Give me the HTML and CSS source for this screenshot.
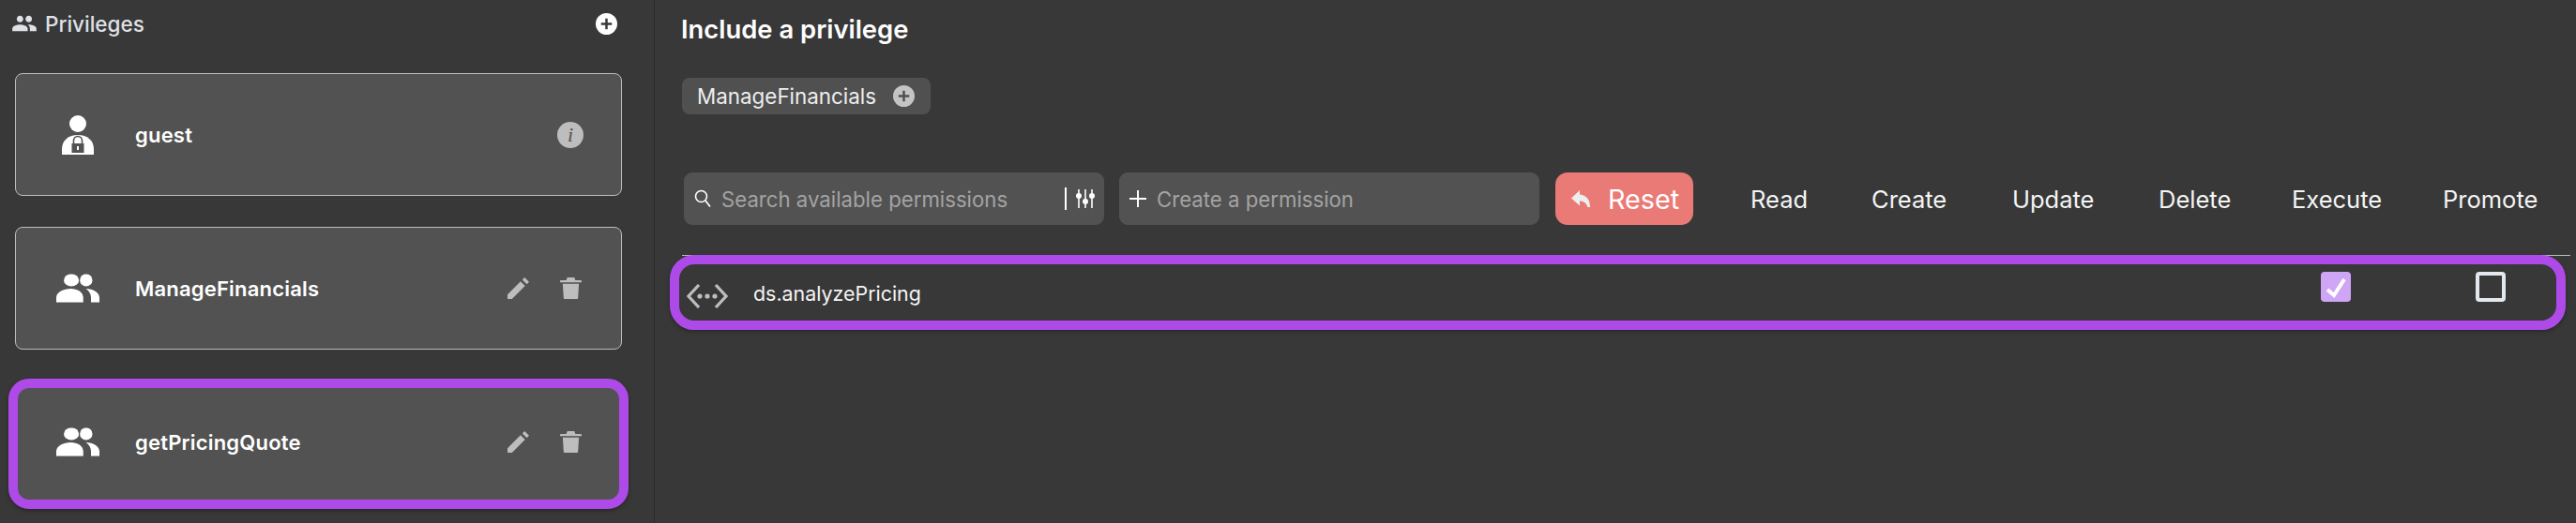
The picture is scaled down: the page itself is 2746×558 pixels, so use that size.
FILE: index.html
```html
<!DOCTYPE html>
<html lang="en">
  <head>
    <meta charset="UTF-8" />
    <title>Privileges</title>
    <link rel="stylesheet" href="styles.css">
  </head>
  <body>
    <div class="page">
      <aside class="sidebar">
        <div class="sidebar-head">
          <span class="sidebar-title">
            <svg class="title-icon" viewBox="0 0 24 24"><use href="#people" /></svg>
            Privileges
          </span>
          <svg class="add-icon" viewBox="0 0 24 24"><use href="#add-circle" /></svg>
        </div>

        <div class="card">
          <svg class="card-icon guest-icon" viewBox="0 0 34 42">
            <circle cx="17" cy="9" r="9" fill="#fff" />
            <path d="M0 42v-6C0 27 7 21 17 21s17 6 17 15v6z" fill="#fff" />
            <rect x="10.500" y="30" width="13" height="10" fill="#525252" />
            <path d="M12.500 30v-3a4.500 4.500 0 0 1 9 0v3" fill="none" stroke="#525252" stroke-width="1.600" />
            <rect x="16" y="33" width="2" height="4" fill="#fff" />
          </svg>
          <span class="card-name">guest</span>
          <span class="info-badge">i</span>
        </div>

        <div class="card">
          <svg class="card-icon" viewBox="0 0 24 16"><use href="#group" /></svg>
          <span class="card-name">ManageFinancials</span>
          <svg class="card-action" viewBox="0 0 24 24"><use href="#edit" /></svg>
          <svg class="card-action" viewBox="0 0 24 24"><use href="#trash" /></svg>
        </div>

        <div class="card card-marked">
          <svg class="card-icon" viewBox="0 0 24 16"><use href="#group" /></svg>
          <span class="card-name">getPricingQuote</span>
          <svg class="card-action" viewBox="0 0 24 24"><use href="#edit" /></svg>
          <svg class="card-action" viewBox="0 0 24 24"><use href="#trash" /></svg>
        </div>
      </aside>

      <main class="content">
        <h1 class="content-title">Include a privilege</h1>

        <div class="chips">
          <span class="chip">
            ManageFinancials
            <svg class="chip-add" viewBox="0 0 24 24"><use href="#add-circle" /></svg>
          </span>
        </div>

        <div class="toolbar">
          <div class="field field-search">
            <svg class="field-icon" viewBox="0 0 18 20">
              <circle cx="7.500" cy="7.500" r="6" fill="none" stroke="#fff" stroke-width="1.600" />
              <path d="M12 12l5 6.500" stroke="#fff" stroke-width="1.800" />
            </svg>
            <span class="field-text">Search available permissions</span>
            <span class="field-divider"></span>
            <svg class="sliders-icon" viewBox="0 0 20 20">
              <path d="M3 0v20M10 0v20M17 0v20" stroke="#fff" stroke-width="1.600" />
              <circle cx="3" cy="7" r="3" fill="#fff" />
              <circle cx="10" cy="13" r="3" fill="#fff" />
              <circle cx="17" cy="7" r="3" fill="#fff" />
            </svg>
          </div>
          <div class="field field-create">
            <svg class="field-icon" viewBox="0 0 18 18">
              <path d="M9 0v18M0 9h18" stroke="#fff" stroke-width="2" />
            </svg>
            <span class="field-text">Create a permission</span>
          </div>
          <button class="reset">
            <svg class="reset-icon" viewBox="0 0 20 18"><path d="M9 0L0 8.500l9 8v-5c4 0 7 2 8.500 6.500H20C20 10 16 5 9 4.500z" fill="#eee" /></svg>
            Reset
          </button>
          <div class="columns">
            <span class="col col-read">Read</span>
            <span class="col col-create">Create</span>
            <span class="col col-update">Update</span>
            <span class="col col-delete">Delete</span>
            <span class="col col-execute">Execute</span>
            <span class="col col-promote">Promote</span>
          </div>
        </div>

        <div class="perm-list">
          <div class="perm-row">
            <svg class="perm-icon" viewBox="0 0 44 26">
              <path d="M13 1L2 13l11 12M31 1l11 12-11 12" fill="none" stroke="#bdbdbd" stroke-width="3.200" />
              <circle cx="14" cy="13" r="2.600" fill="#bdbdbd" />
              <circle cx="22" cy="13" r="2.600" fill="#bdbdbd" />
              <circle cx="30" cy="13" r="2.600" fill="#bdbdbd" />
            </svg>
            <span class="perm-name">ds.analyzePricing</span>
            <span class="check check-on">
              <svg viewBox="0 0 32 32"><path d="M7 19l7 6 11-17" fill="none" stroke="#fff" stroke-width="4" /></svg>
            </span>
            <span class="check"></span>
          </div>
        </div>
      </main>
    </div>

    <svg class="defs" aria-hidden="true">
      <symbol id="people" viewBox="0 0 24 24">
        <path d="M16 11c1.660 0 2.990-1.340 2.990-3S17.660 5 16 5s-3 1.340-3 3 1.340 3 3 3zm-8 0c1.660 0 2.990-1.340 2.990-3S9.660 5 8 5 5 6.340 5 8s1.340 3 3 3zm0 2c-2.330 0-7 1.170-7 3.500V19h14v-2.500c0-2.330-4.670-3.500-7-3.500zm8 0c-.29 0-.62.020-.97.050 1.160.84 1.970 1.970 1.970 3.450V19h6v-2.500c0-2.330-4.670-3.500-7-3.500z" />
      </symbol>
      <symbol id="group" viewBox="0 0 24 16">
        <ellipse cx="8.400" cy="3.500" rx="4.200" ry="3.500" fill="#fff" />
        <ellipse cx="16.600" cy="3.500" rx="3.500" ry="3.500" fill="#fff" />
        <path d="M8 8.200c-3.800 0-8 1.900-8 5V16h15v-2.800c0-3.100-3.200-5-7-5zm8.500 0c1.800 1.200 2.800 3 2.800 5V16H24v-2.800c0-3-3.800-5-7.500-5z" fill="#fff" />
      </symbol>
      <symbol id="add-circle" viewBox="0 0 24 24">
        <path fill-rule="evenodd" d="M12 0a12 12 0 1 0 0 24 12 12 0 0 0 0-24zm1.300 6h-2.600v4.700H6v2.600h4.700V18h2.600v-4.700H18v-2.600h-4.700z" />
      </symbol>
      <symbol id="edit" viewBox="0 0 24 24">
        <path d="M0 24v-5L14.500 4.500l5 5L5 24zM16.500 2.500L19 0l5 5-2.500 2.500z" />
      </symbol>
      <symbol id="trash" viewBox="0 0 24 24">
        <path d="M8 0h8l1 3h6a1 1 0 0 1 1 1v1.500H0V4a1 1 0 0 1 1-1h6zM3 7h18l-1 16a1 1 0 0 1-1 1H5a1 1 0 0 1-1-1z" />
      </symbol>
    </svg>
  </body>
</html>
```

FILE: styles.css
```css
* {
  box-sizing: border-box;
}

html,
body {
  margin: 0;
  height: 100%;
  background: #383838;
  color: #fff;
  font-family: Inter, "Open Sans", sans-serif;
}

.defs {
  display: none;
}

.page {
  display: flex;
  height: 558px;
  overflow: hidden;
}

.sidebar {
  width: 698px;
  flex: none;
  padding: 0 34px 0 16px;
  border-right: 1px solid #2a2a2a;
}

.sidebar-head {
  display: flex;
  align-items: center;
  justify-content: space-between;
  height: 50px;
  margin-bottom: 28px;
  padding-right: 5px;
}

.sidebar-title {
  display: flex;
  align-items: center;
  gap: 8px;
  margin-left: -4px;
  font-size: 22.500px;
  font-weight: 500;
  color: #dfe1e6;
}

.title-icon {
  width: 28px;
  height: 28px;
  fill: #dfe1e6;
}

.add-icon {
  width: 23px;
  height: 23px;
  fill: #fff;
}

.card {
  position: relative;
  display: flex;
  align-items: center;
  height: 131px;
  margin-bottom: 33px;
  padding: 0 42px 0 43px;
  background: #525252;
  border: 1px solid #bdbdbd;
  border-radius: 8px;
}

.card-marked {
  border-color: transparent;
}

/* annotation ring drawn over the row */
.card-marked::after {
  content: "";
  position: absolute;
  top: -3px;
  left: -8px;
  right: -8px;
  bottom: -7px;
  border: 10px solid #ae4ae8;
  border-radius: 22px;
  box-shadow: 0 2px 4px rgba(0, 0, 0, 0.3);
  pointer-events: none;
}

.card-icon {
  width: 46px;
  height: 31px;
  flex: none;
}

.guest-icon {
  width: 34px;
  height: 42px;
  margin: 0 6px;
}

.card-name {
  flex: 1;
  margin-left: 38px;
  font-size: 22px;
  font-weight: 600;
  letter-spacing: 0.2px;
}

.card-action {
  width: 23px;
  height: 23px;
  margin-left: 33px;
  flex: none;
  fill: #bdbdbd;
}

.info-badge {
  display: flex;
  align-items: center;
  justify-content: center;
  width: 28px;
  height: 28px;
  margin-right: -2px;
  border-radius: 50%;
  background: #bdbdbd;
  color: #525252;
  font-family: "Liberation Serif", serif;
  font-style: italic;
  font-size: 22px;
}

.content {
  flex: 1;
  min-width: 0;
  padding: 0 6px 0 29px;
}

.content-title {
  margin: 0 0 0 -1px;
  height: 62px;
  line-height: 62px;
  font-size: 27.400px;
  font-weight: 600;
}

.chips {
  display: flex;
  margin-top: 21px;
}

.chip {
  display: flex;
  align-items: center;
  height: 39px;
  padding: 0 17px 0 16px;
  gap: 18px;
  background: #505050;
  border-radius: 8px;
  font-size: 22.400px;
  color: #eee;
}

.chip-add {
  width: 23px;
  height: 23px;
  fill: #c4c4c4;
}

.toolbar {
  display: flex;
  align-items: center;
  height: 56px;
  margin-top: 62px;
  margin-left: 2px;
}

.field {
  display: flex;
  align-items: center;
  width: 448px;
  height: 56px;
  padding: 0 10px 0 11px;
  background: #525252;
  border-radius: 9px;
}

.field-create {
  margin-left: 16px;
}

.field-icon {
  width: 18px;
  height: 20px;
  flex: none;
}

.field-text {
  flex: 1;
  margin-left: 11px;
  font-size: 22.200px;
  color: #a3a3a3;
  white-space: nowrap;
}

.field-divider {
  width: 2px;
  height: 24px;
  background: #fff;
}

.sliders-icon {
  width: 20px;
  height: 20px;
  margin-left: 10px;
}

.reset {
  display: flex;
  align-items: center;
  gap: 19px;
  width: 147px;
  height: 56px;
  margin-left: 17px;
  padding: 0 0 0 17px;
  border: none;
  border-radius: 13px;
  background: #ea7a76;
  color: #fff;
  font-family: inherit;
  font-size: 28.700px;
}

.reset-icon {
  width: 20px;
  height: 18px;
  flex: none;
}

.columns {
  display: flex;
  margin-left: 61px;
  font-size: 25.500px;
  color: #f4f4f4;
}

.col {
  flex: none;
  white-space: nowrap;
}

.col-read {
  width: 129px;
}

.col-create {
  width: 150px;
}

.col-update {
  width: 156px;
}

.col-delete {
  width: 142px;
}

.col-execute {
  width: 161px;
}

.perm-list {
  position: relative;
  margin-top: 32px;
  border-top: 1px solid #bdbdbd;
}

.perm-row {
  position: relative;
  display: flex;
  align-items: center;
  height: 69px;
  padding-left: 5px;
  padding-right: 69px;
}

/* annotation ring drawn over the row */
.perm-row::after {
  content: "";
  position: absolute;
  top: -1px;
  left: -13px;
  right: 5px;
  bottom: -10px;
  border: 10px solid #ae4ae8;
  border-radius: 26px;
  box-shadow: 0 2px 4px rgba(0, 0, 0, 0.3);
  pointer-events: none;
}

.perm-icon {
  width: 44px;
  height: 26px;
  margin-top: 16px;
  flex: none;
}

.perm-name {
  flex: 1;
  margin-top: 10px;
  margin-left: 27px;
  font-size: 21.400px;
  color: #f4f4f4;
}

.check {
  width: 32px;
  height: 32px;
  margin-bottom: 4px;
  margin-left: 133px;
  flex: none;
  border: 4px solid #e3e8ef;
  border-radius: 4px;
}

.check-on {
  border: none;
  background: #cfa5f5;
}

.check-on svg {
  display: block;
  width: 32px;
  height: 32px;
}
```
